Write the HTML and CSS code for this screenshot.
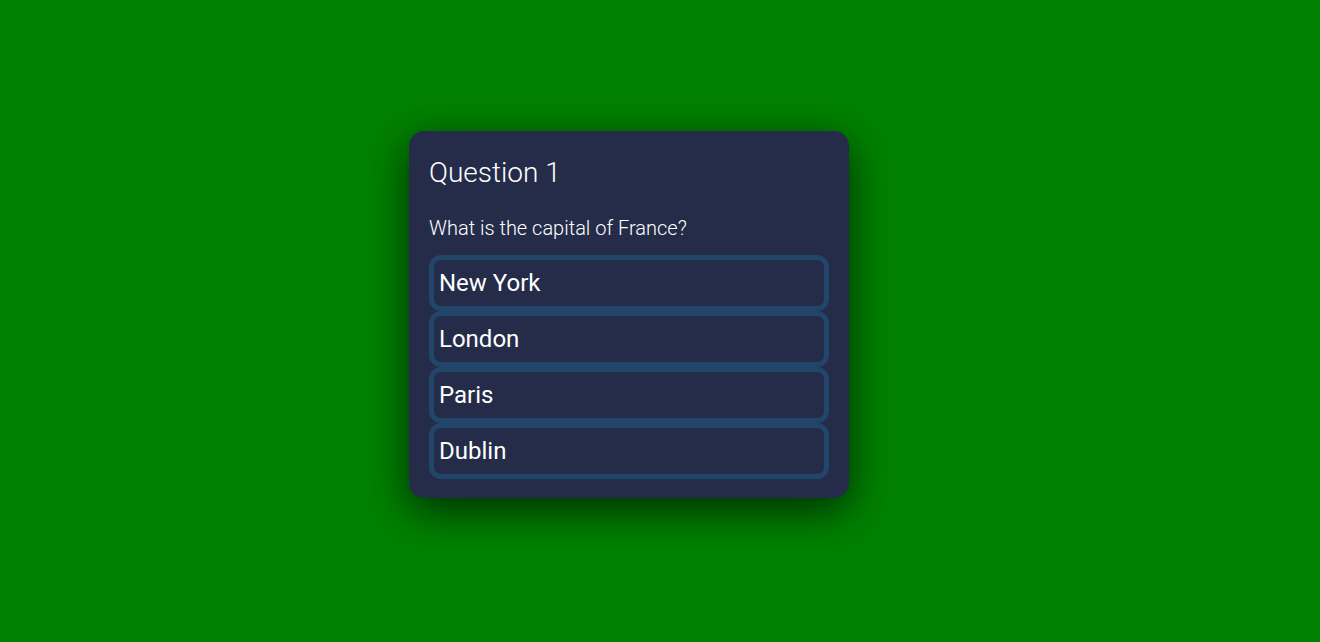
FILE: index.html
```html
<!DOCTYPE html>
<html>
<head>
<meta charset="utf-8">
<link rel="stylesheet" href="styles.css">
</head>
<body>
<main class="stage">
  <section class="card">
    <h2 class="title">Question 1</h2>
    <p class="question">What is the capital of France?</p>
    <div class="answers">
      <button class="answer">New York</button>
      <button class="answer">London</button>
      <button class="answer">Paris</button>
      <button class="answer">Dublin</button>
    </div>
  </section>
</main>
</body>
</html>
```
FILE: styles.css
```css
html, body {
  margin: 0;
  height: 100%;
  background: #008000;
}
.stage {
  display: flex;
  align-items: flex-start;
  padding: 131px 0 0 409px;
  font-family: Roboto, "Liberation Sans", sans-serif;
}
.card {
  width: 400px;
  padding: 20px 20px 19px;
  background: #252c4a;
  border-radius: 15px;
  box-shadow: 0 12px 40px rgba(0, 0, 0, 0.65);
  color: #ffffff;
}
.title {
  margin: 5px 0 0;
  font-size: 28px;
  line-height: 33px;
  font-weight: 300;
}
.question {
  margin: 27px 0 0;
  font-size: 20px;
  line-height: 24px;
  font-weight: 300;
}
.answers {
  margin-top: 15px;
  display: flex;
  flex-direction: column;
}
.answer {
  display: block;
  width: 100%;
  height: 56px;
  margin: 0;
  padding: 0 5px;
  text-align: left;
  background: #252c4a;
  border: 5px solid #22466a;
  border-radius: 12px;
  color: #ffffff;
  font-family: Roboto, "Liberation Sans", sans-serif;
  font-size: 24px;
  font-weight: 400;
  line-height: 28px;
}
```
